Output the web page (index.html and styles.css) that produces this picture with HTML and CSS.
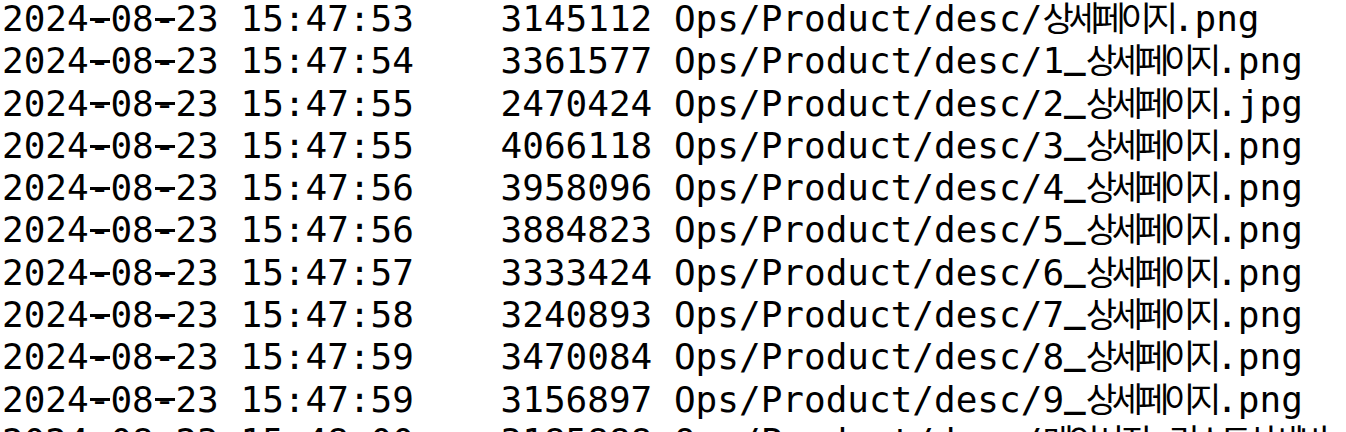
FILE: index.html
```html
<!DOCTYPE html>
<html lang="ko">
<head>
<meta charset="utf-8">
<title>s3 ls</title>
<link rel="stylesheet" href="styles.css">
</head>
<body>
<div class="term">
<div class="line">2024<span class="dash">-</span>08<span class="dash">-</span>23 15:47:53    3145112 Ops/Product/desc/<span class="ko">상세페이지</span>.png</div>
<div class="line">2024<span class="dash">-</span>08<span class="dash">-</span>23 15:47:54    3361577 Ops/Product/desc/1<span class="us">_</span><span class="ko">상세페이지</span>.png</div>
<div class="line">2024<span class="dash">-</span>08<span class="dash">-</span>23 15:47:55    2470424 Ops/Product/desc/2<span class="us">_</span><span class="ko">상세페이지</span>.jpg</div>
<div class="line">2024<span class="dash">-</span>08<span class="dash">-</span>23 15:47:55    4066118 Ops/Product/desc/3<span class="us">_</span><span class="ko">상세페이지</span>.png</div>
<div class="line">2024<span class="dash">-</span>08<span class="dash">-</span>23 15:47:56    3958096 Ops/Product/desc/4<span class="us">_</span><span class="ko">상세페이지</span>.png</div>
<div class="line">2024<span class="dash">-</span>08<span class="dash">-</span>23 15:47:56    3884823 Ops/Product/desc/5<span class="us">_</span><span class="ko">상세페이지</span>.png</div>
<div class="line">2024<span class="dash">-</span>08<span class="dash">-</span>23 15:47:57    3333424 Ops/Product/desc/6<span class="us">_</span><span class="ko">상세페이지</span>.png</div>
<div class="line">2024<span class="dash">-</span>08<span class="dash">-</span>23 15:47:58    3240893 Ops/Product/desc/7<span class="us">_</span><span class="ko">상세페이지</span>.png</div>
<div class="line">2024<span class="dash">-</span>08<span class="dash">-</span>23 15:47:59    3470084 Ops/Product/desc/8<span class="us">_</span><span class="ko">상세페이지</span>.png</div>
<div class="line">2024<span class="dash">-</span>08<span class="dash">-</span>23 15:47:59    3156897 Ops/Product/desc/9<span class="us">_</span><span class="ko">상세페이지</span>.png</div>
<div class="line">2024<span class="dash">-</span>08<span class="dash">-</span>23 15:48:00    3185888 Ops/Product/desc/<span class="ko">메인사진</span><span class="us">_</span><span class="ko">리스트상세비</span></div>
</div>
</body>
</html>
```
FILE: styles.css
```css
html, body {
  margin: 0;
  padding: 0;
  background: #ffffff;
}
body {
  overflow: hidden;
}
.term {
  height: 432px;
  overflow: hidden;
  padding: 0 0 0 2px;
  color: #000000;
  font-family: "DejaVu Sans Mono", "Liberation Mono", monospace;
  font-size: 36px;
}
.line {
  height: 42.3px;
  line-height: 38px;
  white-space: pre;
}
.dash {
  background: linear-gradient(#000000, #000000) 50% 52% / 20px 3px no-repeat;
}
.ko {
  font-family: "Noto Sans CJK KR", "Noto Sans CJK SC", sans-serif;
  font-size: 34px;
  letter-spacing: -5.2px;
  line-height: 0;
}
.us {
  display: inline-block;
  vertical-align: 5px;
  line-height: 0;
  font-weight: bold;
}
```
